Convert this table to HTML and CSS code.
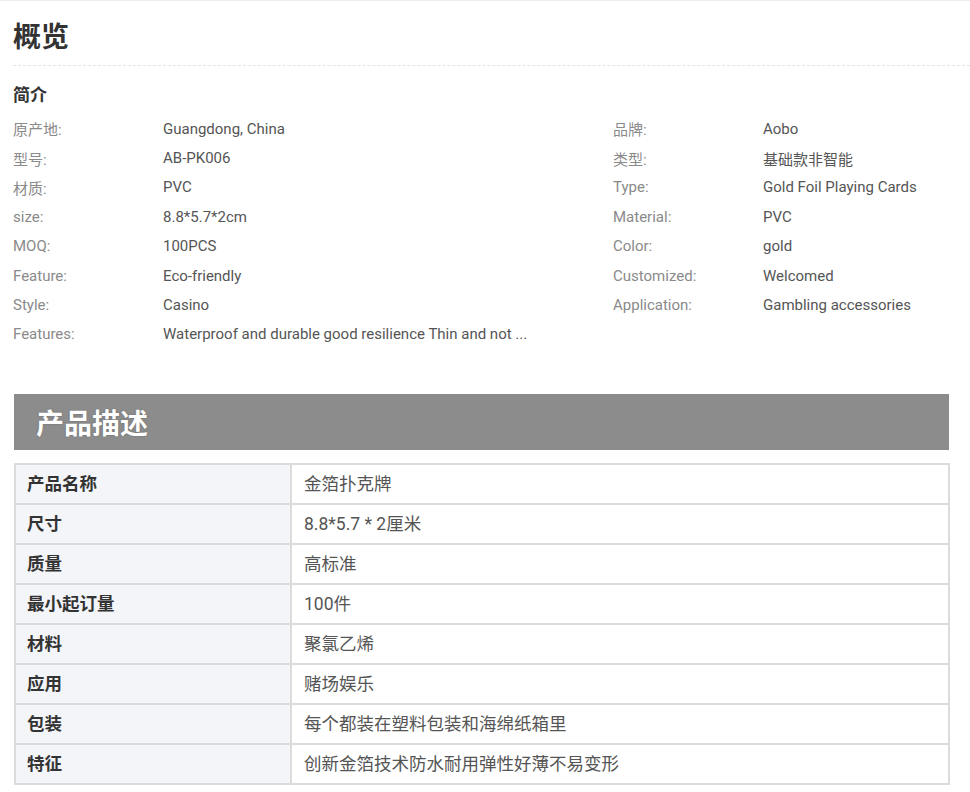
FILE: index.html
```html
<!DOCTYPE html>
<html lang="zh-CN">
<head>
<meta charset="utf-8">
<title>概览</title>
<link rel="stylesheet" href="styles.css">
</head>
<body>
<div class="page">
  <h1 class="title">概览</h1>
  <h2 class="subtitle">简介</h2>
  <div class="specs">
    <div class="k">原产地:</div><div class="v">Guangdong, China</div><div class="k">品牌:</div><div class="v">Aobo</div>
    <div class="k">型号:</div><div class="v">AB-PK006</div><div class="k">类型:</div><div class="v">基础款非智能</div>
    <div class="k">材质:</div><div class="v">PVC</div><div class="k">Type:</div><div class="v">Gold Foil Playing Cards</div>
    <div class="k">size:</div><div class="v">8.8*5.7*2cm</div><div class="k">Material:</div><div class="v">PVC</div>
    <div class="k">MOQ:</div><div class="v">100PCS</div><div class="k">Color:</div><div class="v">gold</div>
    <div class="k">Feature:</div><div class="v">Eco-friendly</div><div class="k">Customized:</div><div class="v">Welcomed</div>
    <div class="k">Style:</div><div class="v">Casino</div><div class="k">Application:</div><div class="v">Gambling accessories</div>
    <div class="k">Features:</div><div class="v wide">Waterproof and durable good resilience Thin and not ...</div>
  </div>

  <div class="desc-bar">产品描述</div>
  <table class="desc">
    <tr><td class="dk">产品名称</td><td class="dv">金箔扑克牌</td></tr>
    <tr><td class="dk">尺寸</td><td class="dv">8.8*5.7 * 2厘米</td></tr>
    <tr><td class="dk">质量</td><td class="dv">高标准</td></tr>
    <tr><td class="dk">最小起订量</td><td class="dv">100件</td></tr>
    <tr><td class="dk">材料</td><td class="dv">聚氯乙烯</td></tr>
    <tr><td class="dk">应用</td><td class="dv">赌场娱乐</td></tr>
    <tr><td class="dk">包装</td><td class="dv">每个都装在塑料包装和海绵纸箱里</td></tr>
    <tr><td class="dk">特征</td><td class="dv">创新金箔技术防水耐用弹性好薄不易变形</td></tr>
  </table>
</div>
</body>
</html>
```

FILE: styles.css
```css
html, body {
  margin: 0;
  padding: 0;
  background: #fff;
}

body {
  font-family: Roboto, "Noto Sans CJK SC", sans-serif;
  color: #333;
}

.page {
  border-top: 1px solid #ececec;
  padding-left: 13px;
  width: 957px;
}

.title {
  margin: 23px 0 0 0;
  font-size: 28px;
  line-height: 28px;
  font-weight: bold;
  color: #333;
  padding-bottom: 13px;
  border-bottom: 1px dashed #e3e3e3;
}

.subtitle {
  margin: 21px 0 0 0;
  font-size: 17px;
  line-height: 17px;
  font-weight: bold;
  color: #333;
}

.specs {
  margin-top: 10px;
  display: grid;
  grid-template-columns: 150px 450px 150px 1fr;
  grid-auto-rows: 29.4px;
  align-items: center;
  font-size: 15px;
}

.specs .k {
  color: #8a8a8a;
}

.specs .v {
  color: #555;
}

.specs .wide {
  grid-column: 2 / 5;
}

.desc-bar {
  margin: 45px 0 0 1px;
  width: 913px;
  height: 50px;
  padding: 6px 0 0 22px;
  background: #8c8c8c;
  color: #fff;
  font-size: 28px;
  font-weight: bold;
  line-height: 50px;
  text-shadow: 0 0 2px rgba(0, 0, 0, 0.25);
}

.desc {
  margin: 13px 0 0 1px;
  width: 936px;
  border-collapse: collapse;
  border: 2px solid #dcdcdc;
  font-size: 17.5px;
}

.desc td {
  border: 2px solid #dcdcdc;
  height: 40px;
  padding: 0 12px 4px 12px;
  box-sizing: border-box;
}

.dk {
  width: 276px;
  background: #f4f5f9;
  font-weight: bold;
  color: #333;
  padding-left: 11px !important;
}

.dv {
  background: #fff;
  color: #555;
}
```
